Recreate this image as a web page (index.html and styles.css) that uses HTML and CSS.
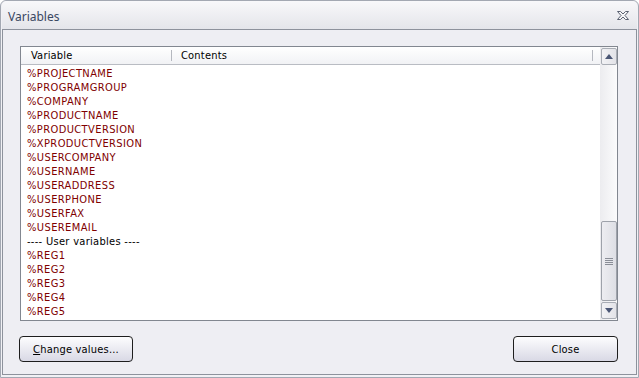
FILE: index.html
```html
<!DOCTYPE html>
<html lang="en">
<head>
    <meta charset="UTF-8">
    <title>Variables</title>
    <link rel="stylesheet" href="styles.css">
</head>
<body>
    <div class="window">
        <div class="titlebar">
            <span class="title">Variables</span>
            <svg class="close-icon" width="12" height="9" viewBox="0 0 12 9">
                <path d="M0.5 0.5 H3.5 L6 3 L8.5 0.5 H11.5 L8 4.5 L11.5 8.5 H8.5 L6 6 L3.5 8.5 H0.5 L4 4.5 Z" fill="#f7f7f9" stroke="#5b6272" stroke-width="1"/>
            </svg>
        </div>

        <div class="client">
            <div class="listbox">
                <div class="list">
                    <div class="header">
                        <div class="col col-var">Variable</div>
                        <div class="col col-contents">Contents</div>
                        <div class="col col-rest"></div>
                    </div>
                    <div class="rows">
                        <div class="row">%PROJECTNAME</div>
                        <div class="row">%PROGRAMGROUP</div>
                        <div class="row">%COMPANY</div>
                        <div class="row">%PRODUCTNAME</div>
                        <div class="row">%PRODUCTVERSION</div>
                        <div class="row">%XPRODUCTVERSION</div>
                        <div class="row">%USERCOMPANY</div>
                        <div class="row">%USERNAME</div>
                        <div class="row">%USERADDRESS</div>
                        <div class="row">%USERPHONE</div>
                        <div class="row">%USERFAX</div>
                        <div class="row">%USEREMAIL</div>
                        <div class="row separator">---- User variables ----</div>
                        <div class="row">%REG1</div>
                        <div class="row">%REG2</div>
                        <div class="row">%REG3</div>
                        <div class="row">%REG4</div>
                        <div class="row">%REG5</div>
                    </div>
                </div>

                <div class="scrollbar">
                    <div class="sb-button">
                        <svg width="8" height="5" viewBox="0 0 8 5"><path d="M4 0 L8 5 H0 Z" fill="#4a5675"/></svg>
                    </div>
                    <div class="sb-track top-track"></div>
                    <div class="sb-thumb">
                        <span class="grip"></span>
                        <span class="grip"></span>
                        <span class="grip"></span>
                        <span class="grip"></span>
                    </div>
                    <div class="sb-button">
                        <svg width="8" height="5" viewBox="0 0 8 5"><path d="M0 0 H8 L4 5 Z" fill="#4a5675"/></svg>
                    </div>
                </div>
            </div>

            <div class="buttons">
                <button class="btn btn-change"><u>C</u>hange values...</button>
                <button class="btn btn-close">Close</button>
            </div>
        </div>
    </div>
</body>
</html>
```

FILE: styles.css
```css
body {
    margin: 0;
    padding: 0;
    background-color: #ffffff;
    font-family: "DejaVu Sans Condensed", "Liberation Sans", sans-serif;
    font-size: 11px;
}

.window {
    box-sizing: border-box;
    width: 639px;
    height: 378px;
    border: 1px solid #a3a8b2;
    border-radius: 6px 6px 0 0;
    background-color: #f1f1f5;
    padding: 0 1px 2px 1px;
    display: flex;
    flex-direction: column;
}

.titlebar {
    height: 28px;
    flex: none;
    background: linear-gradient(#f8f8fa, #e4e5ea);
    border-radius: 5px 5px 0 0;
    display: flex;
    align-items: center;
    justify-content: space-between;
    padding: 0 8px 0 6px;
}

.title {
    font-family: "Noto Sans", "Open Sans", sans-serif;
    font-size: 12px;
    color: #3a4862;
    margin-top: 2px;
}

.close-icon {
    margin-top: 1px;
}

.client {
    flex: 1;
    border: 1px solid #8d929c;
    background-color: #eeeef3;
    display: flex;
    flex-direction: column;
    padding: 16px 18px 12px 17px;
}

.listbox {
    height: 275px;
    box-sizing: border-box;
    border: 1px solid #828790;
    background-color: #fff;
    display: flex;
}

.list {
    flex: 1;
    display: flex;
    flex-direction: column;
}

.header {
    height: 17px;
    border-bottom: 1px solid #b9bcc3;
    background: linear-gradient(#ffffff, #f1f2f5);
    display: flex;
    align-items: center;
    color: #000;
    letter-spacing: 0.2px;
}

.col {
    position: relative;
    box-sizing: border-box;
    height: 17px;
    line-height: 18px;
}

.col::after {
    content: "";
    position: absolute;
    right: 0;
    top: 3px;
    height: 11px;
    border-right: 1px solid #b5b8bf;
}

.col-var {
    width: 151px;
    padding-left: 10px;
}

.col-contents {
    width: 421px;
    padding-left: 9px;
}

.col-rest {
    flex: 1;
}

.col-rest::after {
    display: none;
}

.rows {
    padding-top: 2px;
}

.row {
    height: 14px;
    line-height: 14px;
    padding-left: 6px;
    color: #800000;
    white-space: nowrap;
    letter-spacing: 0.4px;
}

.row.separator {
    color: #000;
    letter-spacing: 0.3px;
}

.scrollbar {
    width: 17px;
    background: linear-gradient(to right, #ececef, #fbfbfc);
    display: flex;
    flex-direction: column;
    padding: 1px 0 1px 1px;
    box-sizing: border-box;
}

.sb-button {
    height: 17px;
    box-sizing: border-box;
    border: 1px solid #a9adb5;
    border-radius: 2px;
    background: linear-gradient(to right, #f2f2f5, #e3e3e8);
    display: flex;
    align-items: center;
    justify-content: center;
}

.top-track {
    height: 156px;
}

.sb-thumb {
    flex: 1;
    box-sizing: border-box;
    border: 1px solid #9ea2aa;
    border-radius: 2px;
    background: linear-gradient(to right, #ededf1, #dedfe5);
    display: flex;
    flex-direction: column;
    align-items: center;
    justify-content: center;
    gap: 1px;
    margin-bottom: 1px;
}

.grip {
    width: 8px;
    height: 1px;
    background-color: #8a8e97;
}

.buttons {
    margin-top: auto;
    display: flex;
    justify-content: space-between;
    padding-left: 0;
}

.btn {
    height: 26px;
    box-sizing: border-box;
    border: 1px solid #1e1e1e;
    border-radius: 4px;
    background: linear-gradient(#fdfdfe, #d9d9e5);
    font-family: "DejaVu Sans Condensed", "Liberation Sans", sans-serif;
    font-size: 11px;
    letter-spacing: 0.2px;
    color: #000;
    padding: 0;
}

.btn-change {
    width: 114px;
    margin-left: -1px;
}

.btn-close {
    width: 105px;
}
```
